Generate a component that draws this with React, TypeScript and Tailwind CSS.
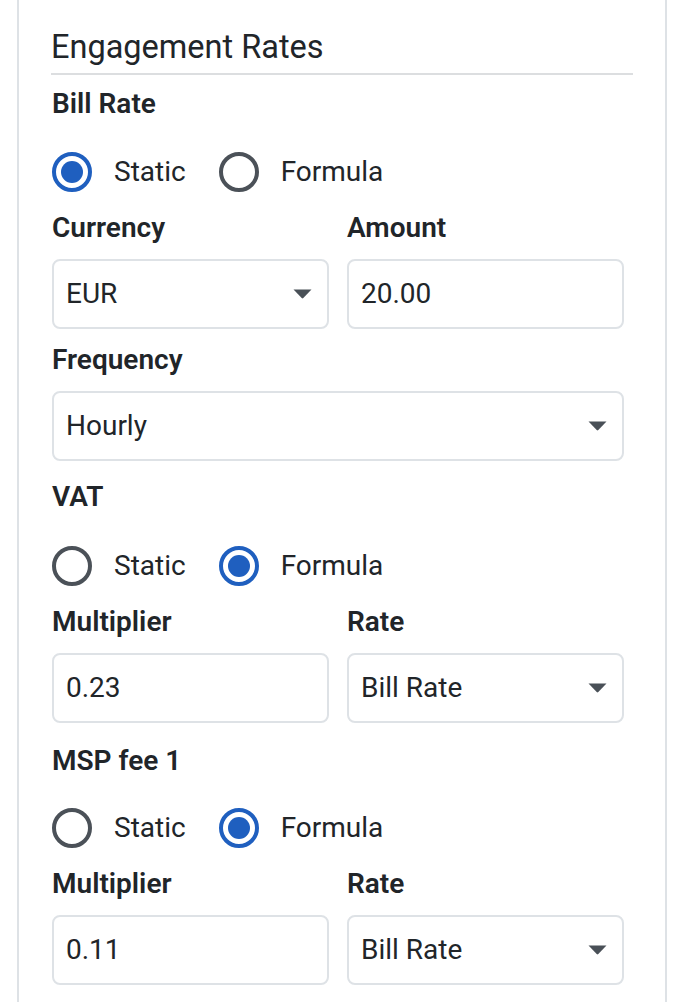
import React from "react";

const font = { fontFamily: "Roboto, 'Noto Sans', 'Liberation Sans', sans-serif" };

function Radio({ checked, label }: { checked: boolean; label: string }) {
  return (
    <div className="flex items-center gap-[22px]">
      {checked ? (
        <div className="w-10 h-10 rounded-full border-[4px] border-[#1f5fbf] flex items-center justify-center">
          <div className="w-[22px] h-[22px] rounded-full bg-[#1f5fbf]" />
        </div>
      ) : (
        <div className="w-10 h-10 rounded-full border-[4px] border-[#4b5158]" />
      )}
      <span className="text-[28px] leading-[36px] text-[#212529]">{label}</span>
    </div>
  );
}

function RadioGroup({ value }: { value: "static" | "formula" }) {
  return (
    <div className="flex items-center gap-[33px]">
      <Radio checked={value === "static"} label="Static" />
      <Radio checked={value === "formula"} label="Formula" />
    </div>
  );
}

function Label({ children, className = "" }: { children: React.ReactNode; className?: string }) {
  return (
    <div className={`text-[28px] leading-[36px] font-semibold text-[#212529] ${className}`}>{children}</div>
  );
}

function Caret() {
  return (
    <svg width="19" height="10" viewBox="0 0 19 10" className="shrink-0">
      <path d="M0.5 0.5 H18.5 L10.3 9 Q9.5 9.8 8.7 9 Z" fill="#495057" />
    </svg>
  );
}

function Box({ value, select }: { value: string; select?: boolean }) {
  return (
    <div className="h-[70px] rounded-[8px] border-2 border-[#dee2e6] bg-white flex items-center pl-[12px] pr-[15px]">
      <span className="flex-1 text-[28px] leading-[36px] text-[#212529]">{value}</span>
      {select && <Caret />}
    </div>
  );
}

function Field({ label, value, select }: { label: string; value: string; select?: boolean }) {
  return (
    <div className="flex flex-col">
      <Label className="mb-[13px]">{label}</Label>
      <Box value={value} select={select} />
    </div>
  );
}

export default function App() {
  return (
    <div className="w-full min-h-[1002px] bg-white" style={font}>
      <div className="ml-[17px] w-[650px] min-h-[1002px] border-x-2 border-[#dee2e6] px-[32px] pt-[27px]">
        <div className="text-[32.5px] leading-[40px] text-[#212529]">Engagement Rates</div>
        <div className="mt-[6px] h-[2px] bg-[#dcdee0]" />
        <div className="pr-[9px]">
          <Label className="mt-[11px] pl-[1px]">Bill Rate</Label>
          <div className="mt-[30px] pl-[1px]">
            <RadioGroup value="static" />
          </div>
          <div className="mt-[18px] grid grid-cols-2 gap-x-[18px] pl-[1px]">
            <Field label="Currency" value="EUR" select />
            <Field label="Amount" value="20.00" />
          </div>
          <div className="mt-[13px] pl-[1px]">
            <Field label="Frequency" value="Hourly" select />
          </div>

          <Label className="mt-[18px] pl-[1px]">VAT</Label>
          <div className="mt-[31px] pl-[1px]">
            <RadioGroup value="formula" />
          </div>
          <div className="mt-[18px] grid grid-cols-2 gap-x-[18px] pl-[1px]">
            <Field label="Multiplier" value="0.23" />
            <Field label="Rate" value="Bill Rate" select />
          </div>

          <Label className="mt-[20px] pl-[1px]">MSP fee 1</Label>
          <div className="mt-[29px] pl-[1px]">
            <RadioGroup value="formula" />
          </div>
          <div className="mt-[18px] grid grid-cols-2 gap-x-[18px] pl-[1px]">
            <Field label="Multiplier" value="0.11" />
            <Field label="Rate" value="Bill Rate" select />
          </div>
        </div>
      </div>
    </div>
  );
}
